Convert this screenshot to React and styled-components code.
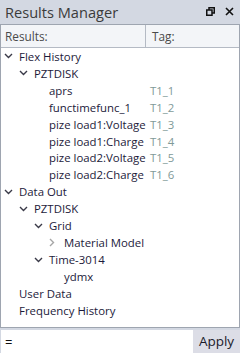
import styled, { createGlobalStyle } from "styled-components"

const Global = createGlobalStyle`
  html, body { margin: 0; padding: 0; }
  body {
    background: #d3d8e2;
    font-family: "Segoe UI", "Open Sans", "Noto Sans", sans-serif;
  }
  * { box-sizing: border-box; }
`

const results = [
  { label: "Flex History", level: 0, chevron: "open" },
  { label: "PZTDISK", level: 1, chevron: "open" },
  { label: "aprs", level: 2, tag: "T1_1" },
  { label: "functimefunc_1", level: 2, tag: "T1_2" },
  { label: "pize load1:Voltage", level: 2, tag: "T1_3" },
  { label: "pize load1:Charge", level: 2, tag: "T1_4" },
  { label: "pize load2:Voltage", level: 2, tag: "T1_5" },
  { label: "pize load2:Charge", level: 2, tag: "T1_6" },
  { label: "Data Out", level: 0, chevron: "open" },
  { label: "PZTDISK", level: 1, chevron: "open" },
  { label: "Grid", level: 2, chevron: "open" },
  { label: "Material Model", level: 3, chevron: "closed" },
  { label: "Time-3014", level: 2, chevron: "open" },
  { label: "ydmx", level: 3 },
  { label: "User Data", level: 0 },
  { label: "Frequency History", level: 0 },
]

const Chevron = ({ open }) =>
  open ? (
    <svg width="9" height="6" viewBox="0 0 9 6">
      <path d="M1 1 L4.5 4.5 L8 1" fill="none" stroke="#3a3a48" strokeWidth="1.4" />
    </svg>
  ) : (
    <svg width="6" height="9" viewBox="0 0 6 9">
      <path d="M1 1 L4.5 4.5 L1 8" fill="none" stroke="#a6a6a6" strokeWidth="1.4" />
    </svg>
  )

const App = () => {
  return (
    <Wrapper>
      <Global />
      <TitleBar>
        <Title>Results Manager</Title>
        <TitleIcons>
          <svg width="9" height="9" viewBox="0 0 9 9">
            <rect x="3" y="0.75" width="5.25" height="5.25" fill="none" stroke="#111" strokeWidth="1.5" />
            <rect x="0.75" y="3" width="5.25" height="5.25" fill="#d3d8e2" stroke="#111" strokeWidth="1.5" />
          </svg>
          <svg width="9" height="9" viewBox="0 0 9 9">
            <path d="M1 1 L8 8 M8 1 L1 8" stroke="#111" strokeWidth="1.6" />
          </svg>
        </TitleIcons>
      </TitleBar>
      <Panel>
        <Header>
          <HeadCell>Results:</HeadCell>
          <HeadCell $last>Tag:</HeadCell>
        </Header>
        <Tree>
          {results.map((r, i) => (
            <Row key={i}>
              <Name $level={r.level}>
                <Toggle>{r.chevron && <Chevron open={r.chevron === "open"} />}</Toggle>
                {r.label}
              </Name>
              {r.tag && <Tag>{r.tag}</Tag>}
            </Row>
          ))}
        </Tree>
      </Panel>
      <Footer>
        <Input defaultValue="=" />
        <ApplyButton>Apply</ApplyButton>
      </Footer>
    </Wrapper>
  )
}

const Wrapper = styled.main`
  width: 240px;
  height: 353px;
  display: flex;
  flex-direction: column;
  background: #d3d8e2;
  overflow: hidden;
`

const TitleBar = styled.div`
  height: 24px;
  display: flex;
  align-items: center;
  justify-content: space-between;
  padding: 0 5px 1px 5px;
  flex-shrink: 0;
`

const Title = styled.span`
  font-size: 14.6px;
  color: #3b3b3b;
`

const TitleIcons = styled.div`
  display: flex;
  gap: 10px;
  align-items: center;
  padding-right: 1px;
`

const Panel = styled.section`
  flex: 1;
  display: flex;
  flex-direction: column;
  background: #fff;
  border: 1px solid #9ea5b0;
  min-height: 0;
`

const Header = styled.div`
  height: 23px;
  flex-shrink: 0;
  display: grid;
  grid-template-columns: 145px 1fr;
  background: #f3f5f8;
  border-bottom: 1px solid #b4bac4;
`

const HeadCell = styled.div`
  display: flex;
  align-items: center;
  padding-left: ${(p) => (p.$last ? "6px" : "4px")};
  font-size: 11.8px;
  color: #4a4a4a;
  border-right: ${(p) => (p.$last ? "none" : "1px solid #b4bac4")};
`

const Tree = styled.div`
  display: flex;
  flex-direction: column;
`

const Row = styled.div`
  height: 16.93px;
  display: grid;
  grid-template-columns: 149px 1fr;
  align-items: center;
  font-size: 11.4px;
`

const Name = styled.div`
  display: flex;
  align-items: center;
  padding-left: ${(p) => 2 + p.$level * 15}px;
  color: #1c1a3a;
  white-space: nowrap;
`

const Toggle = styled.span`
  width: 16px;
  display: inline-flex;
  justify-content: flex-start;
  align-items: center;
  padding-left: 1px;
`

const Tag = styled.span`
  color: #7f9a98;
`

const Footer = styled.div`
  height: 23px;
  margin-top: 2px;
  display: flex;
  flex-shrink: 0;
`

const Input = styled.input`
  width: 192px;
  border: none;
  outline: none;
  background: #fff;
  margin: 0 0 0 1px;
  padding: 0 4px;
  font-family: inherit;
  font-size: 13px;
  color: #111;
`

const ApplyButton = styled.button`
  flex: 1;
  border: none;
  background: #dcdde6;
  font-family: inherit;
  font-size: 13.5px;
  color: #1a1a2a;
  padding: 0 0 1px 0;
`

export default App
